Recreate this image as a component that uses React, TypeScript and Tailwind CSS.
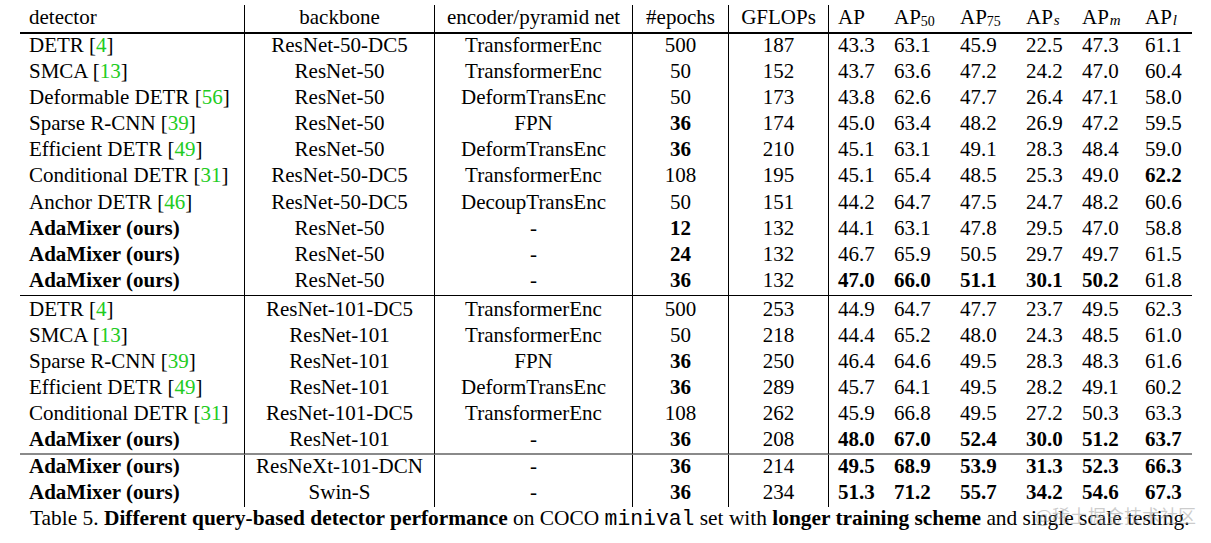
import React from "react";

type Row = {
  det: string;
  ref?: string;
  bold?: boolean;
  bb: string;
  enc: string;
  ep: string;
  epBold?: boolean;
  gf: string;
  ap: string[];
  apBold: boolean[];
};

const N = [false, false, false, false, false, false];
const B = [true, true, true, true, true, true];

const rows: Row[] = [
  { det: "DETR", ref: "4", bb: "ResNet-50-DC5", enc: "TransformerEnc", ep: "500", gf: "187", ap: ["43.3", "63.1", "45.9", "22.5", "47.3", "61.1"], apBold: N },
  { det: "SMCA", ref: "13", bb: "ResNet-50", enc: "TransformerEnc", ep: "50", gf: "152", ap: ["43.7", "63.6", "47.2", "24.2", "47.0", "60.4"], apBold: N },
  { det: "Deformable DETR", ref: "56", bb: "ResNet-50", enc: "DeformTransEnc", ep: "50", gf: "173", ap: ["43.8", "62.6", "47.7", "26.4", "47.1", "58.0"], apBold: N },
  { det: "Sparse R-CNN", ref: "39", bb: "ResNet-50", enc: "FPN", ep: "36", epBold: true, gf: "174", ap: ["45.0", "63.4", "48.2", "26.9", "47.2", "59.5"], apBold: N },
  { det: "Efficient DETR", ref: "49", bb: "ResNet-50", enc: "DeformTransEnc", ep: "36", epBold: true, gf: "210", ap: ["45.1", "63.1", "49.1", "28.3", "48.4", "59.0"], apBold: N },
  { det: "Conditional DETR", ref: "31", bb: "ResNet-50-DC5", enc: "TransformerEnc", ep: "108", gf: "195", ap: ["45.1", "65.4", "48.5", "25.3", "49.0", "62.2"], apBold: [false, false, false, false, false, true] },
  { det: "Anchor DETR", ref: "46", bb: "ResNet-50-DC5", enc: "DecoupTransEnc", ep: "50", gf: "151", ap: ["44.2", "64.7", "47.5", "24.7", "48.2", "60.6"], apBold: N },
  { det: "AdaMixer (ours)", bold: true, bb: "ResNet-50", enc: "-", ep: "12", epBold: true, gf: "132", ap: ["44.1", "63.1", "47.8", "29.5", "47.0", "58.8"], apBold: N },
  { det: "AdaMixer (ours)", bold: true, bb: "ResNet-50", enc: "-", ep: "24", epBold: true, gf: "132", ap: ["46.7", "65.9", "50.5", "29.7", "49.7", "61.5"], apBold: N },
  { det: "AdaMixer (ours)", bold: true, bb: "ResNet-50", enc: "-", ep: "36", epBold: true, gf: "132", ap: ["47.0", "66.0", "51.1", "30.1", "50.2", "61.8"], apBold: [true, true, true, true, true, false] },
  { det: "DETR", ref: "4", bb: "ResNet-101-DC5", enc: "TransformerEnc", ep: "500", gf: "253", ap: ["44.9", "64.7", "47.7", "23.7", "49.5", "62.3"], apBold: N },
  { det: "SMCA", ref: "13", bb: "ResNet-101", enc: "TransformerEnc", ep: "50", gf: "218", ap: ["44.4", "65.2", "48.0", "24.3", "48.5", "61.0"], apBold: N },
  { det: "Sparse R-CNN", ref: "39", bb: "ResNet-101", enc: "FPN", ep: "36", epBold: true, gf: "250", ap: ["46.4", "64.6", "49.5", "28.3", "48.3", "61.6"], apBold: N },
  { det: "Efficient DETR", ref: "49", bb: "ResNet-101", enc: "DeformTransEnc", ep: "36", epBold: true, gf: "289", ap: ["45.7", "64.1", "49.5", "28.2", "49.1", "60.2"], apBold: N },
  { det: "Conditional DETR", ref: "31", bb: "ResNet-101-DC5", enc: "TransformerEnc", ep: "108", gf: "262", ap: ["45.9", "66.8", "49.5", "27.2", "50.3", "63.3"], apBold: N },
  { det: "AdaMixer (ours)", bold: true, bb: "ResNet-101", enc: "-", ep: "36", epBold: true, gf: "208", ap: ["48.0", "67.0", "52.4", "30.0", "51.2", "63.7"], apBold: B },
  { det: "AdaMixer (ours)", bold: true, bb: "ResNeXt-101-DCN", enc: "-", ep: "36", epBold: true, gf: "214", ap: ["49.5", "68.9", "53.9", "31.3", "52.3", "66.3"], apBold: B },
  { det: "AdaMixer (ours)", bold: true, bb: "Swin-S", enc: "-", ep: "36", epBold: true, gf: "234", ap: ["51.3", "71.2", "55.7", "34.2", "54.6", "67.3"], apBold: B },
];

function rowClass(i: number): string {
  if (i === 9) return "h-[27.1px] border-b border-b-black";
  if (i === 10) return "h-[27.8px] pt-[1.6px]";
  if (i >= 11 && i <= 14) return "h-[26.2px]";
  if (i === 15) return "h-[26.4px] border-b-2 border-b-[#8a8a8a]";
  if (i === 16) return "h-[26.2px]";
  if (i === 17) return "h-[26.3px]";
  return "h-[26.1px]";
}

const VL = "border-l border-l-black";

function Cell({ className, children }: { className: string; children?: React.ReactNode }) {
  return <div className={"whitespace-nowrap " + className}>{children}</div>;
}

export default function App() {
  const header = "h-[29px] pt-[1px] border-b-2 border-b-black";
  return (
    <div className="relative w-[1211px] h-[543px] overflow-hidden bg-white text-black font-['Liberation_Serif',serif] text-[21px] leading-[22px]">
      <div className="pt-[5px] pl-[20px]">
        <div className="grid grid-cols-[224px_190px_198px_96px_100px_66px_66px_66px_56px_63px_47px]">
          <Cell className={header + " pl-[9px]"}>detector</Cell>
          <Cell className={header + " text-center " + VL}>backbone</Cell>
          <Cell className={header + " text-center " + VL}>encoder/pyramid net</Cell>
          <Cell className={header + " text-center " + VL}>#epochs</Cell>
          <Cell className={header + " text-center " + VL}>GFLOPs</Cell>
          <Cell className={header + " pl-[9px] " + VL}>AP</Cell>
          <Cell className={header}>
            AP<sub className="text-[14px] leading-none relative top-[2px]">50</sub>
          </Cell>
          <Cell className={header}>
            AP<sub className="text-[14px] leading-none relative top-[2px]">75</sub>
          </Cell>
          <Cell className={header}>
            AP<sub className="text-[15px] italic leading-none relative top-[1px] pl-[1px]">s</sub>
          </Cell>
          <Cell className={header}>
            AP<sub className="text-[15px] italic leading-none relative top-[1px] pl-[1px]">m</sub>
          </Cell>
          <Cell className={header}>
            AP<sub className="text-[15px] italic leading-none relative top-[1px] pl-[1px]">l</sub>
          </Cell>

          {rows.map((r, i) => {
            const rc = rowClass(i);
            return (
              <React.Fragment key={i}>
                <Cell className={rc + " pl-[9px]" + (r.bold ? " font-bold" : "")}>
                  {r.det}
                  {r.ref ? (
                    <>
                      {" ["}
                      <span className="text-[#22cc22]">{r.ref}</span>
                      {"]"}
                    </>
                  ) : null}
                </Cell>
                <Cell className={rc + " text-center " + VL}>{r.bb}</Cell>
                <Cell className={rc + " text-center " + VL}>{r.enc}</Cell>
                <Cell className={rc + " text-center " + VL + (r.epBold ? " font-bold" : "")}>{r.ep}</Cell>
                <Cell className={rc + " text-center " + VL}>{r.gf}</Cell>
                {r.ap.map((v, j) => (
                  <Cell
                    key={j}
                    className={rc + (j === 0 ? " pl-[9px] " + VL : "") + (r.apBold[j] ? " font-bold" : "")}
                  >
                    {v}
                  </Cell>
                ))}
              </React.Fragment>
            );
          })}
        </div>
      </div>
      <div className="pl-[30px] whitespace-nowrap text-[21.4px]">
        Table 5. <span className="font-bold">Different query-based detector performance</span> on COCO{" "}
        <span className="font-['Liberation_Mono',monospace]">minival</span> set with{" "}
        <span className="font-bold">longer training scheme</span> and single scale testing.
      </div>
      <div className="absolute left-[1035px] top-[506px] text-[18px] leading-[18px] text-[#9a9a9a]/50 font-['Noto_Sans_CJK_SC',sans-serif] whitespace-nowrap">
        @稀土掘金技术社区
      </div>
    </div>
  );
}
